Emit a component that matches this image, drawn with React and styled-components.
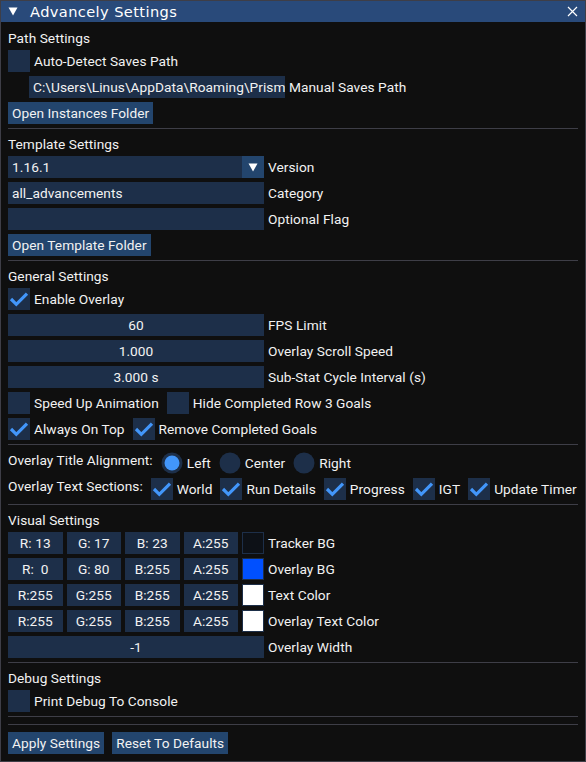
import React from 'react';
import styled, { createGlobalStyle } from 'styled-components';

const GlobalStyle = createGlobalStyle`
  html, body {
    margin: 0;
    padding: 0;
    background: #0f0f0f;
  }
`;

const Window = styled.div`
  width: 586px;
  height: 762px;
  box-sizing: border-box;
  border: 1px solid #3e3e47;
  background: #0f0f0f;
  display: flex;
  flex-direction: column;
  font-family: Roboto, "Liberation Sans", sans-serif;
  font-size: 13.7px;
  letter-spacing: 0.05px;
  color: #f2f2f2;
`;

const TitleBar = styled.div`
  height: 21px;
  background: #294a7a;
  display: flex;
  align-items: center;
  padding: 0 7px;
`;

const TitleText = styled.span`
  flex: 1;
  margin-left: 12px;
  font-family: "DejaVu Sans", sans-serif;
  font-size: 14.6px;
  letter-spacing: 0.4px;
  color: #fff;
  line-height: 21px;
`;

const Body = styled.div`
  padding: 8px 7px;
  display: flex;
  flex-direction: column;
  gap: 4px;
`;

const Header = styled.div`
  height: 16px;
  line-height: 16px;
`;

const PlainText = styled.span`
  line-height: 16px;
  align-self: flex-start;
`;

const Separator = styled.div`
  height: 1px;
  background: #3e3e47;
  margin-bottom: 3px;
`;

const Row = styled.div`
  display: flex;
  align-items: center;
  gap: 8px;
  height: 22px;
  margin-left: ${(p) => p.$indent || 0}px;
`;

const Field = styled.div`
  display: flex;
  align-items: center;
  gap: 4px;
  white-space: nowrap;
`;

const Frame = styled.div`
  width: ${(p) => p.$width || '256px'};
  height: 22px;
  line-height: 22px;
  box-sizing: border-box;
  padding: 0 4px;
  background: #1d2f49;
  white-space: pre;
  overflow: hidden;
  text-align: ${(p) => (p.$center ? 'center' : 'left')};
`;

const ComboBox = styled.div`
  width: 256px;
  height: 22px;
  display: flex;
  background: #1d2f49;
`;

const ComboValue = styled.div`
  flex: 1;
  line-height: 22px;
  padding: 0 4px;
`;

const ComboArrow = styled.div`
  width: 22px;
  height: 22px;
  background: #23456d;
  display: flex;
  align-items: center;
  justify-content: center;
`;

const Button = styled.div`
  height: 22px;
  line-height: 22px;
  padding: 0 4px;
  background: #23456d;
  white-space: nowrap;
  align-self: flex-start;
`;

const ButtonRow = styled.div`
  display: flex;
  gap: 8px;
`;

const Box = styled.div`
  width: 22px;
  height: 22px;
  flex: none;
  background: #1d2f49;
`;

const ColorGrid = styled.div`
  width: 256px;
  display: grid;
  grid-template-columns: repeat(4, 1fr) 22px;
  gap: 4px;
`;

const Swatch = styled.div`
  width: 22px;
  height: 22px;
  box-sizing: border-box;
  background: ${(p) => p.$color};
  box-shadow: inset 0 0 0 1px #1d2f49;
`;

const DownArrow = () => (
  <svg width="10" height="9" viewBox="0 0 10 9">
    <polygon points="0.5,0.5 9.5,0.5 5,8.5" fill="#fff" />
  </svg>
);

const CheckMark = () => (
  <svg width="22" height="22" viewBox="0 0 22 22">
    <polyline
      points="3,11 8.33,16.33 19,5.67"
      fill="none"
      stroke="#4296fa"
      strokeWidth="3.2"
    />
  </svg>
);

const Checkbox = ({ checked, label }) => (
  <Field>
    <Box>{checked && <CheckMark />}</Box>
    <span>{label}</span>
  </Field>
);

const Radio = ({ selected, label }) => (
  <Field>
    <svg width="22" height="22" viewBox="0 0 22 22">
      <circle cx="11" cy="11" r="10.5" fill="#1d2f49" />
      {selected && <circle cx="11" cy="11" r="7.5" fill="#4296fa" />}
    </svg>
    <span>{label}</span>
  </Field>
);

const Input = ({ value, label, center, indent }) => (
  <Row $indent={indent}>
    <Field>
      <Frame $center={center}>{value}</Frame>
      <span>{label}</span>
    </Field>
  </Row>
);

const pad = (n) => String(n).padStart(3, ' ');

const ColorRow = ({ rgba, label }) => {
  const [r, g, b, a] = rgba;
  return (
    <Row>
      <Field>
        <ColorGrid>
          <Frame $center $width="auto">R:{pad(r)}</Frame>
          <Frame $center $width="auto">G:{pad(g)}</Frame>
          <Frame $center $width="auto">B:{pad(b)}</Frame>
          <Frame $center $width="auto">A:{pad(a)}</Frame>
          <Swatch $color={`rgb(${r}, ${g}, ${b})`} />
        </ColorGrid>
        <span>{label}</span>
      </Field>
    </Row>
  );
};

export default function App() {
  return (
    <>
      <GlobalStyle />
      <Window>
        <TitleBar>
          <DownArrow />
          <TitleText>Advancely Settings</TitleText>
          <svg width="11" height="11" viewBox="0 0 11 11">
            <path d="M1 1 L10 10 M10 1 L1 10" stroke="#fff" strokeWidth="1.2" />
          </svg>
        </TitleBar>
        <Body>
          <Header>Path Settings</Header>
          <Row>
            <Checkbox label="Auto-Detect Saves Path" />
          </Row>
          <Input
            indent={21}
            value={'C:\\Users\\Linus\\AppData\\Roaming\\PrismLauncher\\instances'}
            label="Manual Saves Path"
          />
          <Button>Open Instances Folder</Button>
          <Separator />

          <Header>Template Settings</Header>
          <Row>
            <Field>
              <ComboBox>
                <ComboValue>1.16.1</ComboValue>
                <ComboArrow>
                  <DownArrow />
                </ComboArrow>
              </ComboBox>
              <span>Version</span>
            </Field>
          </Row>
          <Input value="all_advancements" label="Category" />
          <Input value="" label="Optional Flag" />
          <Button>Open Template Folder</Button>
          <Separator />

          <Header>General Settings</Header>
          <Row>
            <Checkbox checked label="Enable Overlay" />
          </Row>
          <Input center value="60" label="FPS Limit" />
          <Input center value="1.000" label="Overlay Scroll Speed" />
          <Input center value="3.000 s" label="Sub-Stat Cycle Interval (s)" />
          <Row>
            <Checkbox label="Speed Up Animation" />
            <Checkbox label="Hide Completed Row 3 Goals" />
          </Row>
          <Row>
            <Checkbox checked label="Always On Top" />
            <Checkbox checked label="Remove Completed Goals" />
          </Row>
          <Separator />

          <Row>
            <PlainText>Overlay Title Alignment:</PlainText>
            <Radio selected label="Left" />
            <Radio label="Center" />
            <Radio label="Right" />
          </Row>
          <Row>
            <PlainText>Overlay Text Sections:</PlainText>
            <Checkbox checked label="World" />
            <Checkbox checked label="Run Details" />
            <Checkbox checked label="Progress" />
            <Checkbox checked label="IGT" />
            <Checkbox checked label="Update Timer" />
          </Row>
          <Separator />

          <Header>Visual Settings</Header>
          <ColorRow rgba={[13, 17, 23, 255]} label="Tracker BG" />
          <ColorRow rgba={[0, 80, 255, 255]} label="Overlay BG" />
          <ColorRow rgba={[255, 255, 255, 255]} label="Text Color" />
          <ColorRow rgba={[255, 255, 255, 255]} label="Overlay Text Color" />
          <Input center value="-1" label="Overlay Width" />
          <Separator />

          <Header>Debug Settings</Header>
          <Row>
            <Checkbox label="Print Debug To Console" />
          </Row>
          <Separator />
          <Separator />
          <ButtonRow>
            <Button>Apply Settings</Button>
            <Button>Reset To Defaults</Button>
          </ButtonRow>
        </Body>
      </Window>
    </>
  );
}
